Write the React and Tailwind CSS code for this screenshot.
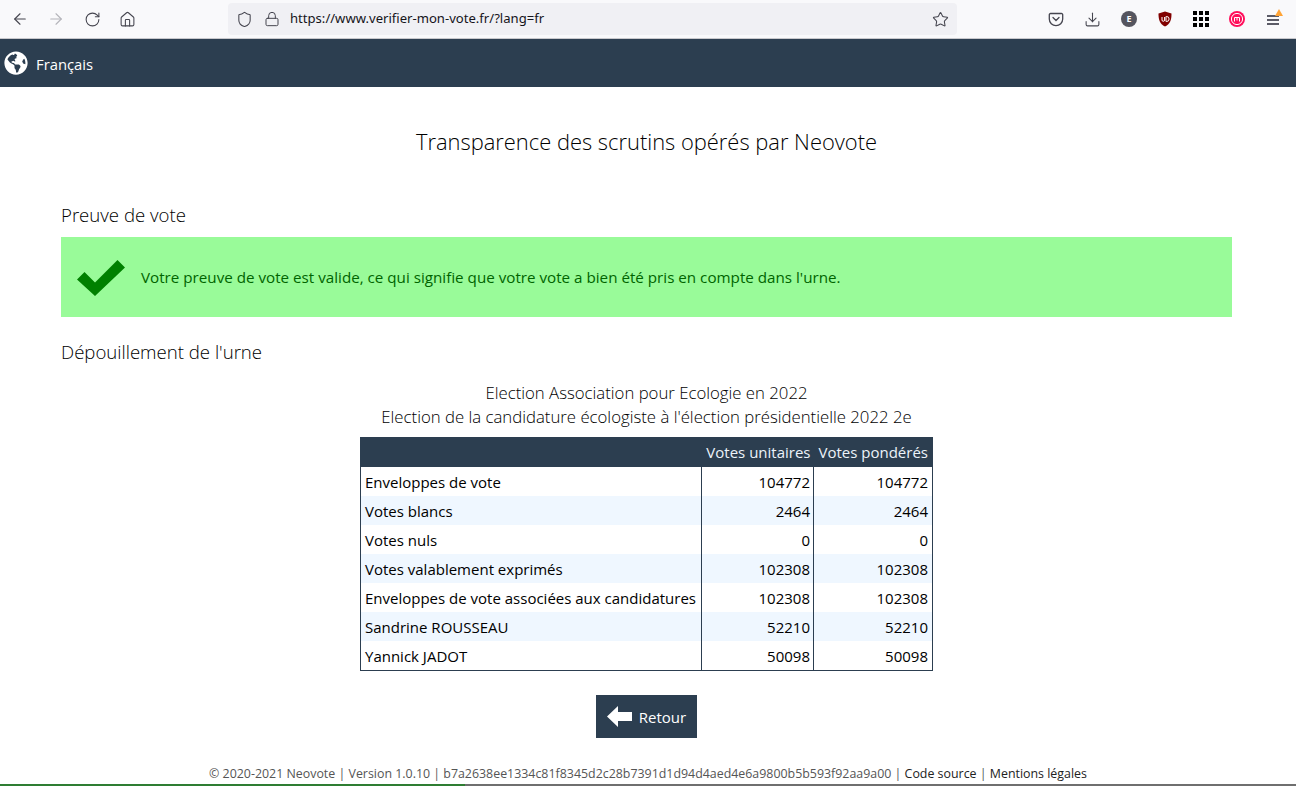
import { ArrowLeft, ArrowRight, RotateCw, Home, Shield, Lock, Star, Download } from "lucide-react";
import { FaGlobeAmericas } from "react-icons/fa";

const rows = [
  ["Enveloppes de vote", "104772", "104772"],
  ["Votes blancs", "2464", "2464"],
  ["Votes nuls", "0", "0"],
  ["Votes valablement exprimés", "102308", "102308"],
  ["Enveloppes de vote associées aux candidatures", "102308", "102308"],
  ["Sandrine ROUSSEAU", "52210", "52210"],
  ["Yannick JADOT", "50098", "50098"],
];

function BrowserBar() {
  return (
    <div className="h-[39px] bg-[#f9f9fb] border-b border-[#c8c8cc] flex items-center text-[#45454f] font-['Noto_Sans',sans-serif]">
      <div className="flex items-center w-[228px] pl-[11px]">
        <ArrowLeft size={18} strokeWidth={1.5} />
        <ArrowRight size={18} strokeWidth={1.5} className="ml-[18px] text-[#b4b4ba]" />
        <RotateCw size={17} strokeWidth={1.5} className="ml-[19px]" />
        <Home size={17} strokeWidth={1.5} className="ml-[18px]" />
      </div>
      <div className="w-[729px] h-[32px] bg-[#f0f0f4] rounded flex items-center pl-[8px] pr-[8px]">
        <Shield size={17} strokeWidth={1.5} />
        <Lock size={16} strokeWidth={1.5} className="ml-[11px]" />
        <span className="ml-[10px] text-[13.100px] text-[#15141a] flex-1">https://www.verifier-mon-vote.fr/?lang=fr</span>
        <Star size={17} strokeWidth={1.5} />
      </div>
      <div className="flex items-center pl-[91px] gap-[20px]">
        <svg width="16" height="16" viewBox="0 0 16 16" fill="none" stroke="currentColor" strokeWidth="1.3">
          <path d="M2.500 2.500h11a1.200 1.200 0 0 1 1.200 1.200V8a6.700 6.700 0 0 1-13.400 0V3.700a1.200 1.200 0 0 1 1.200-1.200z" />
          <path d="M5 6.500l3 3 3-3" strokeLinecap="round" />
        </svg>
        <Download size={17} strokeWidth={1.5} />
        <div className="w-[16px] h-[16px] rounded-full bg-[#55555f] text-white text-[9px] font-bold flex items-center justify-center">E</div>
        <svg width="16" height="16" viewBox="0 0 16 16">
          <path d="M8 0.500l6.500 2c0 6-1 10.500-6.500 13C2.500 13 1.500 8.500 1.500 2.500z" fill="#800000" />
          <path d="M5 6v3a1.300 1.300 0 0 0 2.600 0V6M9 5.500v5h.6a2.500 2.500 0 0 0 0-5z" fill="none" stroke="#fff" strokeWidth="1" />
        </svg>
        <div className="grid grid-cols-3 gap-[2px] w-[16px]">
          {Array.from({ length: 9 }).map((_, i) => (
            <div key={i} className="w-[4px] h-[4px] bg-black" />
          ))}
        </div>
        <svg width="16" height="16" viewBox="0 0 16 16" fill="none">
          <circle cx="8" cy="8" r="8" fill="#ff0f5b" />
          <circle cx="8" cy="8" r="5.600" stroke="#fff" strokeWidth="1" />
          <path d="M5.500 10.500V6.500h5v4M8 6.500v3" stroke="#fff" strokeWidth="1" />
        </svg>
        <div className="relative w-[16px] h-[16px] ml-[1px]">
          <div className="absolute left-[1px] top-[4px] w-[12px] h-[1.500px] bg-[#5b5b66]" />
          <div className="absolute left-[1px] top-[8px] w-[12px] h-[1.500px] bg-[#5b5b66]" />
          <div className="absolute left-[1px] top-[12px] w-[12px] h-[1.500px] bg-[#5b5b66]" />
          <svg className="absolute left-[9px] top-[-2px]" width="8" height="7" viewBox="0 0 8 7">
            <path d="M4 0l4 7H0z" fill="#ffa436" />
          </svg>
        </div>
      </div>
    </div>
  );
}

function App() {
  return (
    <div className="h-[786px] overflow-hidden bg-white flex flex-col font-['Open_Sans','Noto_Sans',sans-serif] text-black">
      <BrowserBar />

      <div className="h-[48px] bg-[#2c3e50] flex items-center pl-[4px] text-white">
        <FaGlobeAmericas size={24} />
        <span className="ml-[8px] pt-[2px] text-[14.800px]">Français</span>
      </div>

      <main className="flex-1 flex flex-col pr-[3px]">
        <h1 className="mt-[40px] text-center text-[21.900px] font-light leading-[30px]">
          Transparence des scrutins opérés par Neovote
        </h1>

        <div className="px-[61px] mt-[45px]">
          <h2 className="text-[18.600px] font-light leading-[26px]">Preuve de vote</h2>
          <div className="mt-[9px] h-[80px] bg-[#99fb99] flex items-center pl-[16px] text-[#006400]">
            <svg width="48" height="36" viewBox="0 0 48 36" fill="#008000" className="mt-[2px]">
              <path d="M0 19.500L7.500 12l10.500 10.500L40.500 0 48 7.500 18 36z" />
            </svg>
            <span className="ml-[16px] text-[15.200px]">
              Votre preuve de vote est valide, ce qui signifie que votre vote a bien été pris en compte dans l'urne.
            </span>
          </div>
          <h2 className="mt-[22px] text-[18.600px] font-light leading-[26px]">Dépouillement de l'urne</h2>
        </div>

        <div className="mt-[16px] text-center text-[16.750px] font-light leading-[24px]">
          <div>Election Association pour Ecologie en 2022</div>
          <div>Election de la candidature écologiste à l'élection présidentielle 2022 2e</div>
        </div>

        <table className="mt-[8px] mx-auto w-[573px] table-fixed border border-[#2c3e50] border-collapse text-[15px]">
          <colgroup>
            <col className="w-[341px]" />
            <col className="w-[112px]" />
            <col />
          </colgroup>
          <thead>
            <tr className="h-[29px] bg-[#2c3e50] text-[#ecf3fa]">
              <th />
              <th className="text-right font-normal pr-[3px] whitespace-nowrap">Votes unitaires</th>
              <th className="text-right font-normal pr-[4px] whitespace-nowrap">Votes pondérés</th>
            </tr>
          </thead>
          <tbody>
            {rows.map((r, i) => (
              <tr key={r[0]} className={i === 6 ? "h-[30px] bg-white" : i % 2 === 1 ? "h-[29px] bg-[#eff7ff]" : "h-[29px] bg-white"}>
                <td className="pl-[4px] pt-[2px] whitespace-nowrap align-top leading-[27px]">{r[0]}</td>
                <td className="text-right pr-[3px] pt-[2px] align-top leading-[27px] border-l border-[#2c3e50]">{r[1]}</td>
                <td className="text-right pr-[4px] pt-[2px] align-top leading-[27px] border-l border-[#2c3e50]">{r[2]}</td>
              </tr>
            ))}
          </tbody>
        </table>

        <button className="mt-[24px] mx-auto w-[101px] h-[43px] bg-[#2c3e50] text-white text-[15px] flex items-center justify-center gap-[7px]">
          <svg width="25" height="21" viewBox="0 0 25 21" fill="#fff">
            <path d="M0 10.500L11 0v6h14v9H11v6z" />
          </svg>
          <span className="pt-[2px]">Retour</span>
        </button>

        <footer className="mt-auto text-center text-[12.400px] leading-[16px] text-[#555] pl-[3px]">
          © 2020-2021 Neovote | Version 1.0.10 | b7a2638ee1334c81f8345d2c28b7391d1d94d4aed4e6a9800b5b593f92aa9a00 | <span className="text-[#222]">Code source</span> | <span className="text-[#222]">Mentions légales</span>
        </footer>
        <div className="h-[2px] shrink-0" />
      </main>
      <div className="h-[2px] shrink-0 flex">
        <div className="w-[465px] bg-[#2e7d32]" />
        <div className="flex-1 bg-[#6f6f6f]" />
      </div>
    </div>
  );
}

export default App;
